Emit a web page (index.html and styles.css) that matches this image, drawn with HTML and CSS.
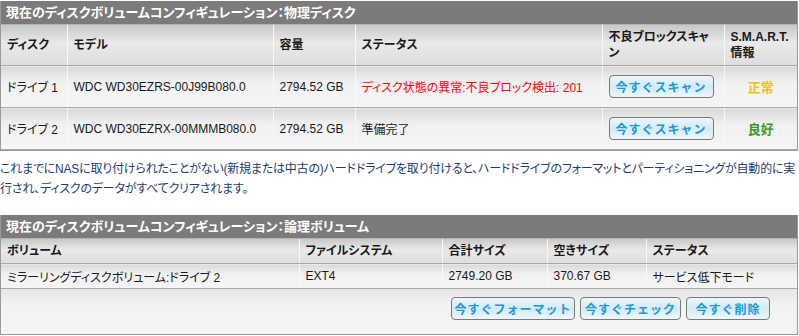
FILE: index.html
```html
<!DOCTYPE html>
<html lang="ja">
  <head>
    <meta charset="UTF-8" />
    <meta name="viewport" content="width=device-width, initial-scale=1.0" />
    <title>ディスクボリューム</title>
    <link rel="stylesheet" href="styles.css">
  </head>
  <body>
    <div class="page">
      <div class="panel">
        <div class="panel-title">現在のディスクボリュームコンフィギュレーション：物理ディスク</div>
        <table class="grid disks">
          <colgroup>
            <col style="width: 66px" />
            <col style="width: 206px" />
            <col style="width: 82px" />
            <col style="width: 247px" />
            <col style="width: 122px" />
            <col />
          </colgroup>
          <thead>
            <tr>
              <th>ディスク</th>
              <th>モデル</th>
              <th>容量</th>
              <th>ステータス</th>
              <th>不良ブロックスキャ<br />ン</th>
              <th>S.M.A.R.T. 情報</th>
            </tr>
          </thead>
          <tbody>
            <tr>
              <td>ドライブ 1</td>
              <td>WDC WD30EZRS-00J99B080.0</td>
              <td>2794.52 GB</td>
              <td class="bad">ディスク状態の異常:不良ブロック検出: 201</td>
              <td><button class="btn btn-scan">今すぐスキャン</button></td>
              <td class="smart warn">正常</td>
            </tr>
            <tr>
              <td>ドライブ 2</td>
              <td>WDC WD30EZRX-00MMMB080.0</td>
              <td>2794.52 GB</td>
              <td>準備完了</td>
              <td><button class="btn btn-scan">今すぐスキャン</button></td>
              <td class="smart good">良好</td>
            </tr>
          </tbody>
        </table>
      </div>

      <p class="note">これまでにNASに取り付けられたことがない(新規または中古の)ハードドライブを取り付けると、ハードドライブのフォーマットとパーティショニングが自動的に実行され、ディスクのデータがすべてクリアされます。</p>

      <div class="panel">
        <div class="panel-title">現在のディスクボリュームコンフィギュレーション：論理ボリューム</div>
        <table class="grid volumes">
          <colgroup>
            <col style="width: 298px" />
            <col style="width: 143px" />
            <col style="width: 105px" />
            <col style="width: 99px" />
            <col />
          </colgroup>
          <thead>
            <tr>
              <th>ボリューム</th>
              <th>ファイルシステム</th>
              <th>合計サイズ</th>
              <th>空きサイズ</th>
              <th>ステータス</th>
            </tr>
          </thead>
          <tbody>
            <tr>
              <td>ミラーリングディスクボリューム:ドライブ 2</td>
              <td>EXT4</td>
              <td>2749.20 GB</td>
              <td>370.67 GB</td>
              <td>サービス低下モード</td>
            </tr>
          </tbody>
        </table>
        <div class="actions">
          <button class="btn btn-format">今すぐフォーマット</button>
          <button class="btn btn-check">今すぐチェック</button>
          <button class="btn btn-delete">今すぐ削除</button>
        </div>
      </div>
    </div>
  </body>
</html>
```

FILE: styles.css
```css
body {
  margin: 0;
  background: #fff;
  font-family: "Liberation Sans", "Noto Sans CJK JP", sans-serif;
  font-size: 12px;
  font-feature-settings: "palt";
  color: #1a1a1a;
}
.page {
  width: 798px;
  padding-top: 1px;
}
.panel {
  border-left: 1px solid #9a9a9a;
  border-right: 1px solid #9a9a9a;
  border-bottom: 1px solid #9a9a9a;
  background: #f3f3f3;
}
.panel-title {
  height: 23px;
  line-height: 23px;
  padding-left: 5px;
  background: #7b7b7b;
  border-bottom: 1px solid #b4b4b4;
  color: #fff;
  font-weight: bold;
  font-size: 13px;
  white-space: nowrap;
}
.grid {
  width: 100%;
  border-collapse: collapse;
  table-layout: fixed;
}
.grid th,
.grid td {
  text-align: left;
  padding: 0 6px;
  border-left: 1px solid #f8f8f8;
  border-bottom: 1px solid #a8a8a8;
}
.grid th:first-child,
.grid td:first-child {
  border-left: none;
}
.grid th {
  font-weight: bold;
  line-height: 16px;
  background: linear-gradient(#c8c8c8, #e9e9e9 45%, #dedede);
}
.grid td {
  background: linear-gradient(#d9d9d9, #f1f1f1 40%, #f5f5f5);
  white-space: nowrap;
}
.disks th {
  height: 40px;
}
.disks td {
  height: 41px;
}
.volumes th {
  height: 24px;
}
.volumes td {
  height: 24px;
}
.grid td.bad {
  color: #ff0000;
}
.grid td.smart {
  text-align: center;
  font-weight: bold;
  font-size: 13px;
}
.warn {
  color: #f0c020;
}
.good {
  color: #3a9a2a;
}
.btn {
  height: 23px;
  padding: 0;
  border: 1px solid #7a7a7a;
  border-radius: 4px;
  background: linear-gradient(#eef6fa, #d3eaf5 50%, #eef7fb);
  color: #1a9ad6;
  font-family: "Noto Sans CJK JP", sans-serif;
  font-size: 12px;
  font-weight: bold;
  letter-spacing: 1px;
  cursor: pointer;
}
.btn-scan {
  width: 105px;
}
.btn-format {
  width: 124px;
}
.btn-check {
  width: 101px;
}
.btn-delete {
  width: 84px;
}
.note {
  margin: 8px 0 16px 0;
  line-height: 20px;
  letter-spacing: -0.2px;
  color: #1e3c74;
}
.actions {
  height: 45px;
  display: flex;
  justify-content: flex-end;
  align-items: flex-start;
  gap: 5px;
  padding: 8px 27px 0 0;
  box-sizing: border-box;
  background: linear-gradient(#e6e6e6, #f3f3f3 40%);
}
```
